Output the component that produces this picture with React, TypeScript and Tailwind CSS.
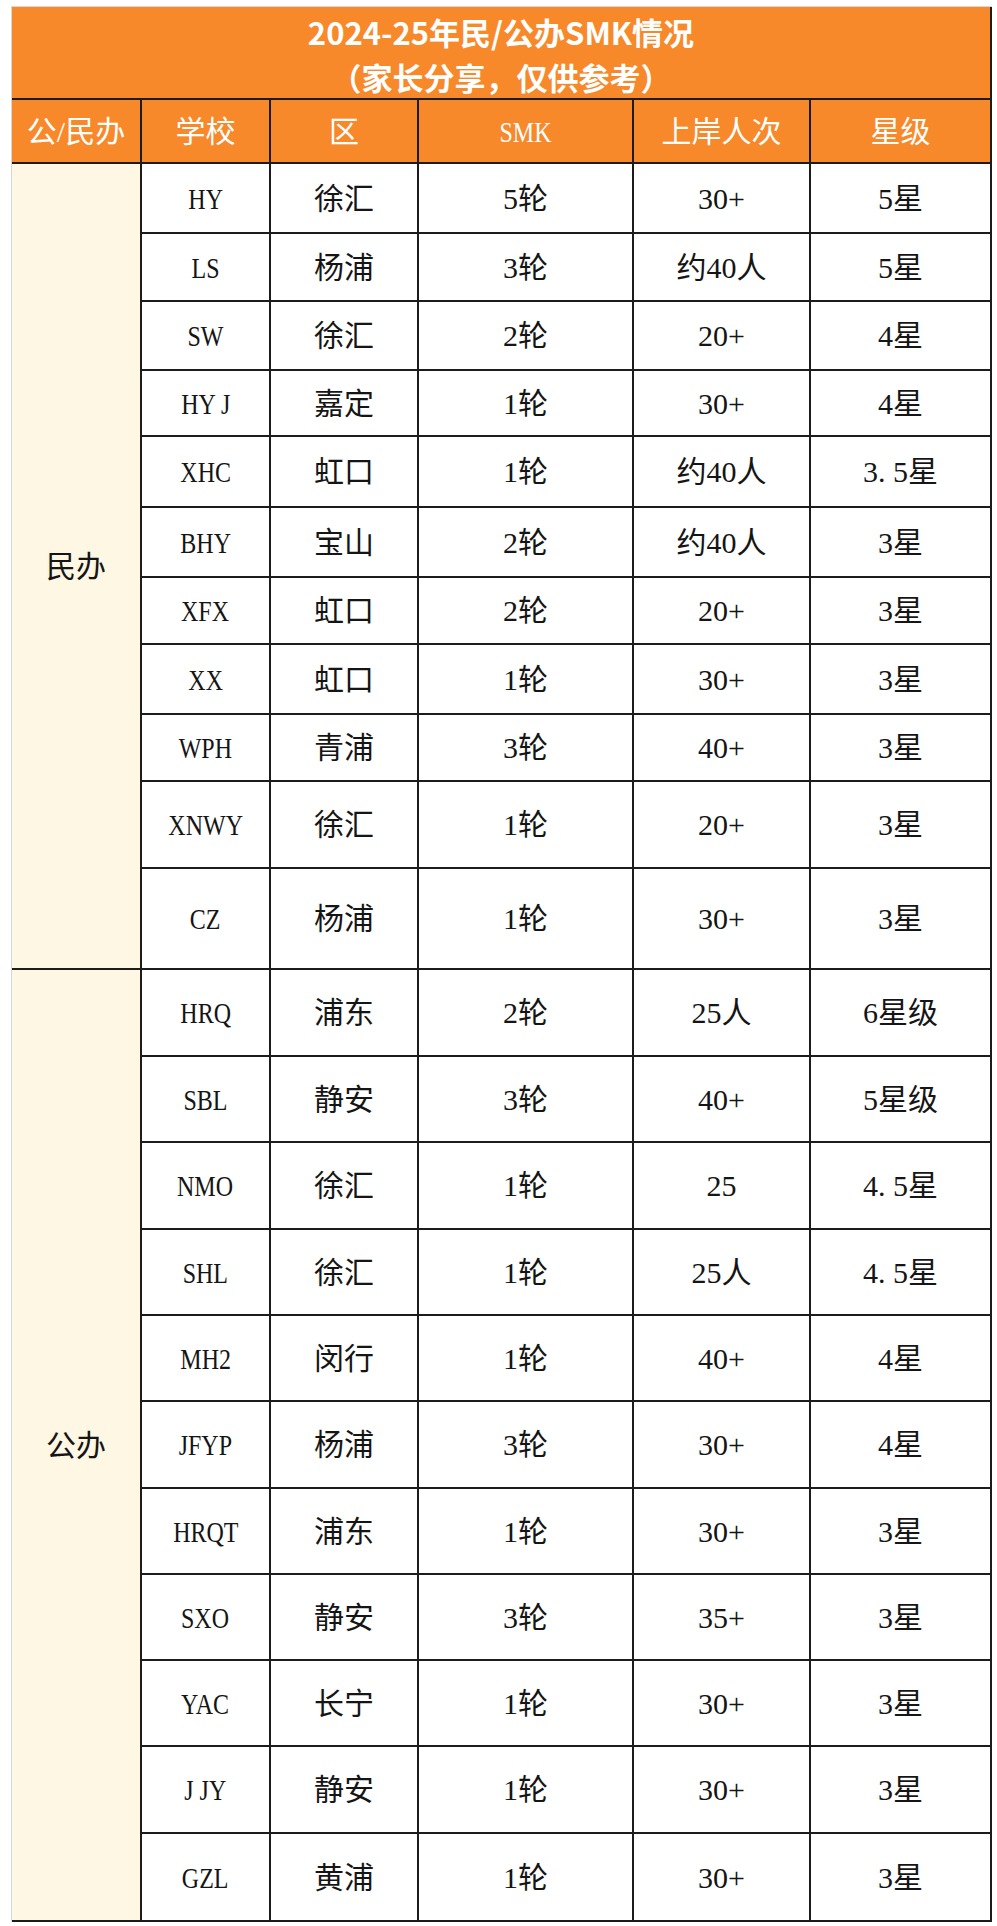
import React from "react";

type Row = { code: string; area: string; smk: string; count: string; star: string; h: string };

const privateRows: Row[] = [
  { code: "HY", area: "徐汇", smk: "5轮", count: "30+", star: "5星", h: "h-[70px]" },
  { code: "LS", area: "杨浦", smk: "3轮", count: "约40人", star: "5星", h: "h-[68px]" },
  { code: "SW", area: "徐汇", smk: "2轮", count: "20+", star: "4星", h: "h-[69px]" },
  { code: "HY J", area: "嘉定", smk: "1轮", count: "30+", star: "4星", h: "h-[66px]" },
  { code: "XHC", area: "虹口", smk: "1轮", count: "约40人", star: "3. 5星", h: "h-[71px]" },
  { code: "BHY", area: "宝山", smk: "2轮", count: "约40人", star: "3星", h: "h-[70px]" },
  { code: "XFX", area: "虹口", smk: "2轮", count: "20+", star: "3星", h: "h-[67px]" },
  { code: "XX", area: "虹口", smk: "1轮", count: "30+", star: "3星", h: "h-[70px]" },
  { code: "WPH", area: "青浦", smk: "3轮", count: "40+", star: "3星", h: "h-[67px]" },
  { code: "XNWY", area: "徐汇", smk: "1轮", count: "20+", star: "3星", h: "h-[87px]" },
  { code: "CZ", area: "杨浦", smk: "1轮", count: "30+", star: "3星", h: "h-[99px]" },
];

const publicRows: Row[] = [
  { code: "HRQ", area: "浦东", smk: "2轮", count: "25人", star: "6星级", h: "h-[87px]" },
  { code: "SBL", area: "静安", smk: "3轮", count: "40+", star: "5星级", h: "h-[86px]" },
  { code: "NMO", area: "徐汇", smk: "1轮", count: "25", star: "4. 5星", h: "h-[87px]" },
  { code: "SHL", area: "徐汇", smk: "1轮", count: "25人", star: "4. 5星", h: "h-[86px]" },
  { code: "MH2", area: "闵行", smk: "1轮", count: "40+", star: "4星", h: "h-[86px]" },
  { code: "JFYP", area: "杨浦", smk: "3轮", count: "30+", star: "4星", h: "h-[87px]" },
  { code: "HRQT", area: "浦东", smk: "1轮", count: "30+", star: "3星", h: "h-[86px]" },
  { code: "SXO", area: "静安", smk: "3轮", count: "35+", star: "3星", h: "h-[86px]" },
  { code: "YAC", area: "长宁", smk: "1轮", count: "30+", star: "3星", h: "h-[86px]" },
  { code: "J JY", area: "静安", smk: "1轮", count: "30+", star: "3星", h: "h-[87px]" },
  { code: "GZL", area: "黄浦", smk: "1轮", count: "30+", star: "3星", h: "h-[86px]" },
];

const cell = "flex items-center justify-center border-r-2 border-[#1c1c1c]";
const serif = "font-[family-name:'Liberation_Serif','Noto_Sans_CJK_SC',serif]";
const sans = "font-[family-name:'Noto_Sans_CJK_SC',sans-serif]";

function Group({ label, rows }: { label: string; rows: Row[] }) {
  return (
    <div className="flex border-b-2 border-[#1c1c1c]">
      <div className={`${cell} w-[130px] bg-[#fef7e3] text-[30px] text-[#151515] ${serif}`}>
        {label}
      </div>
      <div className="flex flex-col">
        {rows.map((r, i) => (
          <div
            key={r.code}
            className={`flex ${r.h} ${i < rows.length - 1 ? "border-b-2 border-[#1c1c1c]" : ""} text-[30px] text-[#151515] ${serif}`}
          >
            <div className={`${cell} w-[129px]`}>
              <span className="inline-block scale-x-[0.8] whitespace-pre">{r.code}</span>
            </div>
            <div className={`${cell} w-[148px]`}>{r.area}</div>
            <div className={`${cell} w-[215px]`}>{r.smk}</div>
            <div className={`${cell} w-[177px]`}>{r.count}</div>
            <div className={`${cell} w-[181px] whitespace-pre`}>{r.star}</div>
          </div>
        ))}
      </div>
    </div>
  );
}

export default function App() {
  return (
    <div className="min-h-screen bg-white pt-[6px] pl-[11px]">
      <div className="w-[981px] border-l border-t border-[#d8d8d8]">
        <div className={`flex h-[91px] flex-col items-center justify-center border-r-2 border-[#1c1c1c] bg-[#f7892b] pt-[3px] text-[31px] font-bold leading-[45px] text-white ${sans}`}>
          <div>2024-25年民/公办SMK情况</div>
          <div>（家长分享，仅供参考）</div>
        </div>

        <div className={`flex h-[66px] border-y-2 border-[#1c1c1c] bg-[#f7892b] text-[30px] text-white ${serif}`}>
          <div className={`${cell} w-[130px]`}>公/民办</div>
          <div className={`${cell} w-[129px]`}>学校</div>
          <div className={`${cell} w-[148px]`}>区</div>
          <div className={`${cell} w-[215px]`}>
            <span className="inline-block scale-x-[0.8]">SMK</span>
          </div>
          <div className={`${cell} w-[177px]`}>上岸人次</div>
          <div className={`${cell} w-[181px]`}>星级</div>
        </div>

        <Group label="民办" rows={privateRows} />
        <Group label="公办" rows={publicRows} />
      </div>
    </div>
  );
}
